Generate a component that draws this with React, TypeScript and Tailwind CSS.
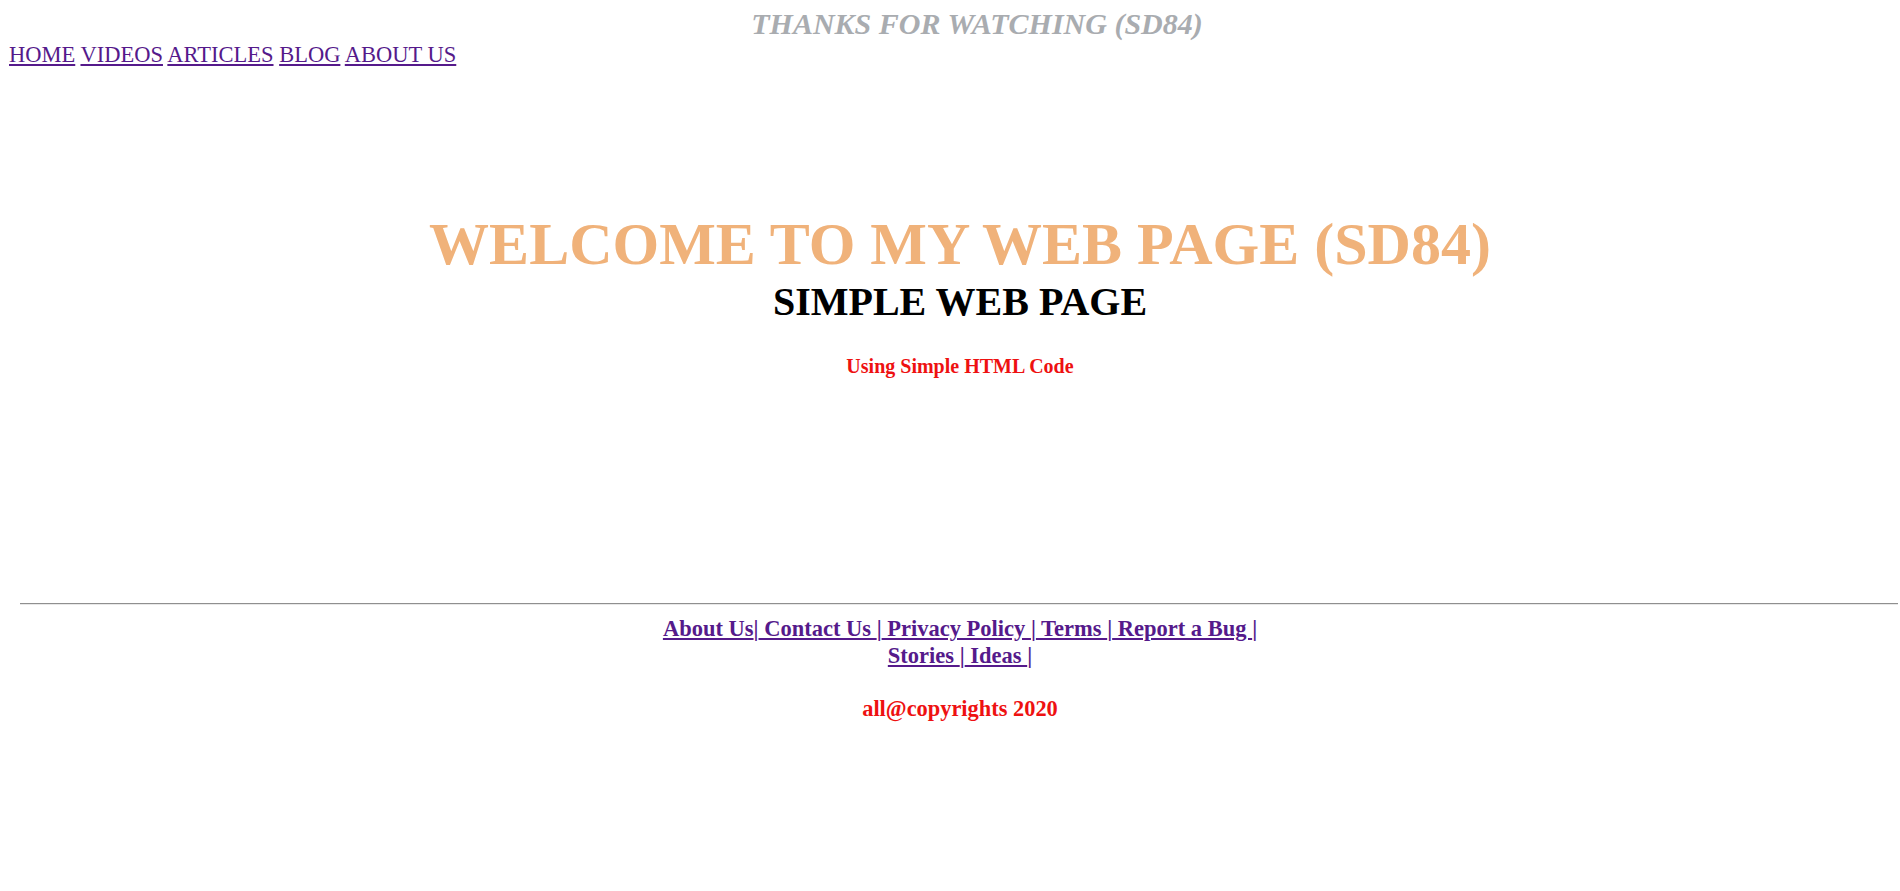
const serif = "font-['Liberation_Serif','Times_New_Roman',serif]";

const navLinks = ["HOME", "VIDEOS", "ARTICLES", "BLOG", "ABOUT US"];

const footerRowOne = ["About Us", " Contact Us ", " Privacy Policy ", " Terms ", " Report a Bug "];
const footerRowTwo = ["Stories ", " Ideas "];

function FooterRow({ items }: { items: string[] }) {
  return (
    <div className="whitespace-pre">
      {items.map((label) => (
        <span key={label}>
          <a href="#" className="underline">
            {label}
          </a>
          |
        </span>
      ))}
    </div>
  );
}

export default function App() {
  return (
    <div className={`min-h-[891px] bg-white ${serif}`}>
      <div className="pt-[7px] pl-[54px] text-center">
        <h2 className="text-[30px] leading-[34px] font-bold italic text-[#a9acb0]">
          THANKS FOR WATCHING (SD84)
        </h2>
      </div>

      <nav className="mt-[1px] pl-[9px] text-[22.5px] leading-[26px] text-[#551a8b]">
        {navLinks.map((label, i) => (
          <span key={label}>
            <a href="#" className="underline">
              {label}
            </a>
            {i < navLinks.length - 1 ? " " : ""}
          </span>
        ))}
      </nav>

      <div className="pl-[20px] text-center">
        <h1 className="mt-[142px] text-[60px] leading-[68px] font-bold text-[#f0b27a]">
          WELCOME TO MY WEB PAGE (SD84)
        </h1>
        <h2 className="mt-[2px] text-[40px] leading-[44px] font-bold text-black">SIMPLE WEB PAGE</h2>
        <p className="mt-[31px] text-[20px] leading-[22px] font-bold text-[#ee1111]">
          Using Simple HTML Code
        </p>
      </div>

      <hr className="mt-[226px] ml-[20px] mr-[2px] border-0 border-t border-b border-t-[#8f8f8f] border-b-[#e8e8e8]" />

      <footer className="pl-[20px] text-center font-bold">
        <div className="mt-[11px] text-[22.5px] leading-[26.5px] text-[#551a8b]">
          <FooterRow items={footerRowOne} />
          <FooterRow items={footerRowTwo} />
        </div>
        <p className="mt-[27px] text-[22.4px] leading-[26px] text-[#ee1111]">all@copyrights 2020</p>
      </footer>
    </div>
  );
}
